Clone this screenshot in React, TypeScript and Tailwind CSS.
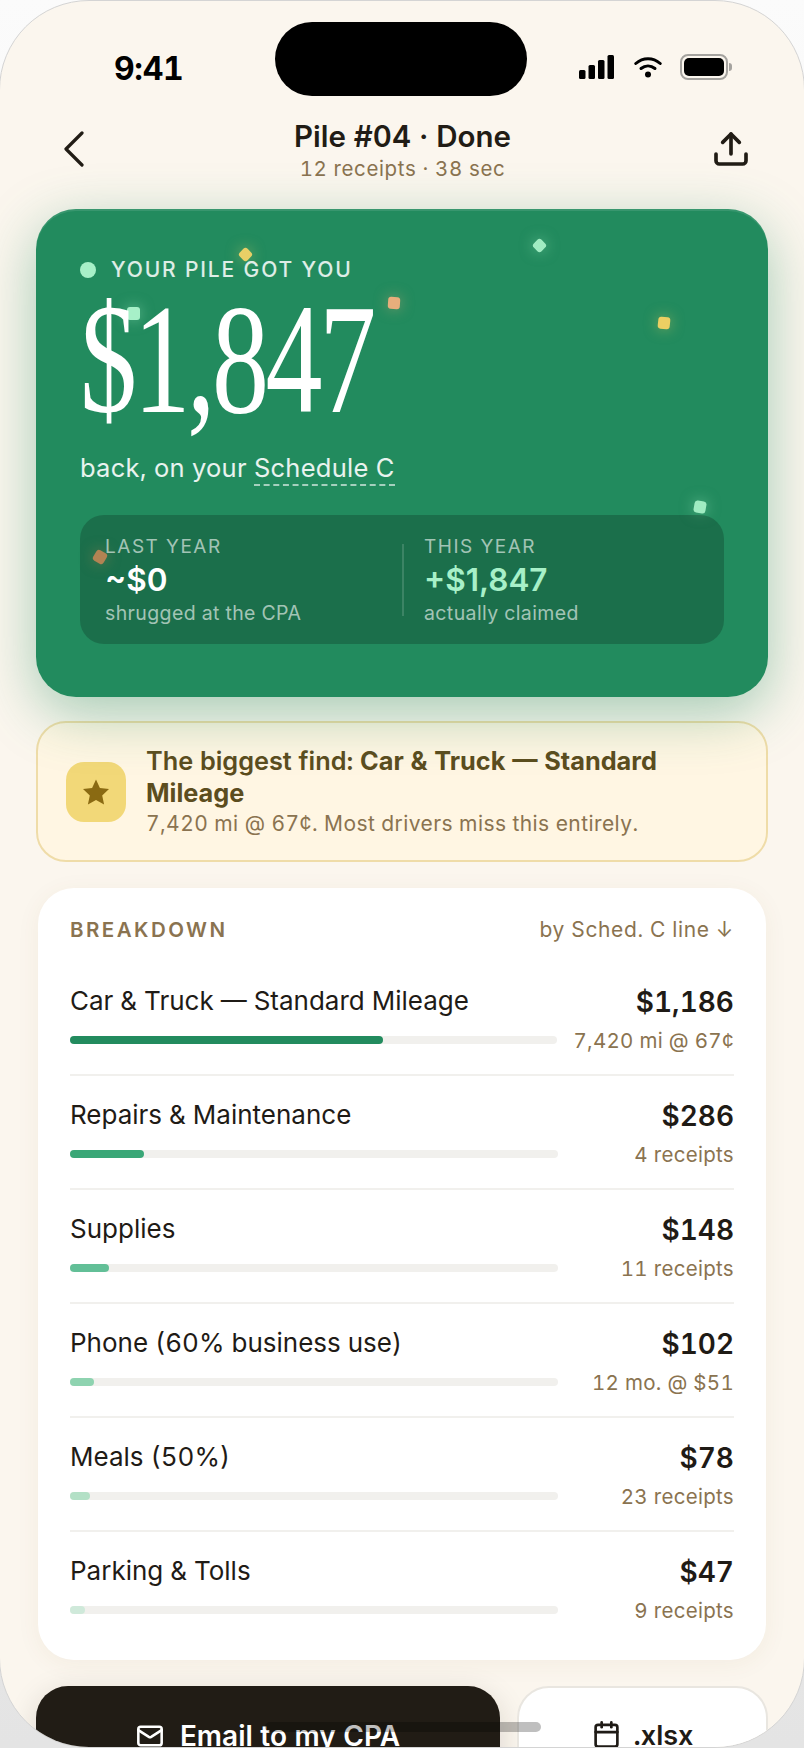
import { Calendar, Mail, Upload } from 'lucide-react';

const ROWS = [
  { name: 'Car & Truck — Standard Mileage', amount: '$1,186', note: '7,420 mi @ 67¢', pct: 64.2, color: 'bg-[#228b5e]' },
  { name: 'Repairs & Maintenance', amount: '$286', note: '4 receipts', pct: 15.2, color: 'bg-[#3aa777]' },
  { name: 'Supplies', amount: '$148', note: '11 receipts', pct: 8, color: 'bg-[#62bf97]' },
  { name: 'Phone (60% business use)', amount: '$102', note: '12 mo. @ $51', pct: 5, color: 'bg-[#8ed3b0]' },
  { name: 'Meals (50%)', amount: '$78', note: '23 receipts', pct: 4, color: 'bg-[#b3e0c6]' },
  { name: 'Parking & Tolls', amount: '$47', note: '9 receipts', pct: 3, color: 'bg-[#cfe9da]' },
];

function StatusBar() {
  return (
    <div className="flex h-[112px] items-start justify-between pl-[114px] pr-[72px] pt-[22px]">
      <span className="mt-[26px] text-[32px] font-bold leading-[40px] tracking-[-0.01em] text-black">9:41</span>
      <div className="absolute left-[275px] top-[21px] h-[74px] w-[252px] rounded-full bg-black" />
      <div className="mt-[31px] flex items-center gap-[18px]">
        <svg className="mr-[2px]" width="35" height="24" viewBox="0 0 35 24" fill="#000">
          <rect x="0" y="15" width="6.5" height="9" rx="1.5" />
          <rect x="9.5" y="10" width="6.5" height="14" rx="1.5" />
          <rect x="19" y="5" width="6.5" height="19" rx="1.5" />
          <rect x="28.5" y="0" width="6.5" height="24" rx="1.5" />
        </svg>
        <svg width="28" height="22" viewBox="0 0 28 22" fill="none" stroke="#000" strokeWidth="3" strokeLinecap="round">
          <path d="M1.8 7.5C9 1 19 1 26.2 7.5" />
          <path d="M7 12.5C11.2 9 16.8 9 21 12.5" />
          <circle cx="14" cy="18.5" r="3" fill="#000" stroke="none" />
        </svg>
        <div className="flex items-center">
          <div className="h-[26px] w-[48px] rounded-[8px] border-2 border-[#a5a39f] p-[2px]">
            <div className="h-full w-full rounded-[5px] bg-black" />
          </div>
          <div className="ml-[1px] h-[8px] w-[3px] rounded-r-full bg-[#a5a39f]" />
        </div>
      </div>
    </div>
  );
}

function Spark({ className }: { className: string }) {
  return <div className={`absolute rounded-[3px] ${className}`} />;
}

function Hero() {
  return (
    <section className="relative z-10 h-[488px] rounded-[40px] bg-[#228b5e] px-[44px] pt-[45px] shadow-[0_16px_56px_rgba(34,139,94,0.4),inset_0_2px_0_rgba(255,255,255,0.1)]">
      {/* confetti, offsets are relative to the card */}
      <Spark className="left-[204px] top-[40px] h-[11px] w-[11px] rotate-45 bg-[#e8cf66] shadow-[0_0_14px_rgba(232,207,102,0.5)]" />
      <Spark className="left-[91px] top-[98px] h-[13px] w-[13px] bg-[#a7f0c8] shadow-[0_0_14px_rgba(167,240,200,0.5)]" />
      <Spark className="left-[352px] top-[88px] h-[12px] w-[12px] rotate-[4deg] bg-[#e8ae7c] shadow-[0_0_14px_rgba(232,174,124,0.5)]" />
      <Spark className="left-[498px] top-[31px] h-[11px] w-[11px] rotate-45 bg-[#a0ecc2] shadow-[0_0_14px_rgba(160,236,194,0.5)]" />
      <Spark className="left-[622px] top-[108px] h-[12px] w-[12px] rotate-[6deg] bg-[#eccf63] shadow-[0_0_14px_rgba(236,207,99,0.5)]" />
      <Spark className="left-[658px] top-[292px] h-[12px] w-[12px] rotate-[10deg] bg-[#a0ecc2] shadow-[0_0_14px_rgba(160,236,194,0.5)]" />
      <Spark className="left-[58px] top-[342px] h-[12px] w-[12px] rotate-[30deg] bg-[#e0a468] shadow-[0_0_14px_rgba(224,164,104,0.5)]" />

      <div className="relative flex items-center gap-[15px]">
        <span className="h-[16px] w-[16px] rounded-full bg-[#a7f0c8]" />
        <span className="text-[21px] font-medium leading-[32px] tracking-[0.088em] text-white/85">YOUR PILE GOT YOU</span>
      </div>
      <div className="relative h-[159px] whitespace-nowrap font-['Liberation_Serif',serif] text-[156px] leading-[148px] tracking-[-0.03em] text-white">
        <span className="inline-block origin-left scale-x-[0.73]">$1,847</span>
      </div>
      <p className="relative mt-[6px] text-[25.5px] leading-[34px] tracking-[0.01em] text-white/90">
        back, on your <span className="border-b-2 border-dashed border-white/60 pb-[1px]">Schedule C</span>
      </p>
      <div className="relative mt-[30px] flex h-[129px] items-center rounded-[24px] bg-black/20">
        <div className="w-[322px] pl-[25px]">
          <Stat label="LAST YEAR" value="~$0" note="shrugged at the CPA" valueColor="text-white" />
        </div>
        <div className="h-[72px] w-[2px] bg-white/15" />
        <div className="flex-1 pl-[20px]">
          <Stat label="THIS YEAR" value="+$1,847" note="actually claimed" valueColor="text-[#a7f0c8]" />
        </div>
      </div>
    </section>
  );
}

function Stat({ label, value, note, valueColor }: { label: string; value: string; note: string; valueColor: string }) {
  return (
    <div>
      <div className="text-[19px] leading-[27px] tracking-[0.08em] text-white/60">{label}</div>
      <div className={`text-[31.5px] font-semibold leading-[40px] [font-variant-numeric:normal] ${valueColor}`}>{value}</div>
      <div className="text-[19.5px] leading-[26px] tracking-[0.02em] text-white/60">{note}</div>
    </div>
  );
}

function Callout() {
  return (
    <section className="mt-[24px] flex h-[141px] items-center gap-[20px] rounded-[30px] border-2 border-[#efdca8] bg-[#fff6e3] pl-[28px] pr-[24px]">
      <div className="flex h-[60px] w-[60px] shrink-0 items-center justify-center rounded-[18px] bg-[#f2d878]">
        <svg width="30" height="30" viewBox="0 0 30 30" fill="#8a6a12">
          <path d="M15 2.5l3.9 8.6 9.1 1-6.8 6.3 1.9 9.1-8.1-4.6-8.1 4.6 1.9-9.1L2 12.1l9.1-1z" />
        </svg>
      </div>
      <div className="-mt-[1px]">
        <p className="text-[25.3px] font-semibold leading-[32px] text-[#5c4d1e]">
          The biggest find: <strong className="font-bold">Car &amp; Truck — Standard Mileage</strong>
        </p>
        <p className="mt-[1px] text-[21px] leading-[28px] tracking-[0.02em] text-[#8a7350]">
          7,420 mi @ 67¢. Most drivers miss this entirely.
        </p>
      </div>
    </section>
  );
}

function Breakdown() {
  return (
    <section className="relative z-10 mx-[2px] mt-[26px] h-[772px] rounded-[36px] bg-white px-[32px] pt-[28px] shadow-[0_4px_24px_rgba(120,80,40,0.06)]">
      <div className="flex items-center justify-between pb-[18px]">
        <span className="text-[20.5px] font-semibold leading-[28px] tracking-[0.12em] text-[#8a7350]">BREAKDOWN</span>
        <span className="text-[21px] leading-[28px] tracking-[0.03em] text-[#8a7350]">by Sched. C line ↓</span>
      </div>
      {ROWS.map((row, i) => (
        <div key={row.name} className={`flex h-[114px] gap-[16px] pt-[21px] ${i < ROWS.length - 1 ? 'border-b-2 border-[#f1f0ed]' : ''}`}>
          <div className="min-w-0 flex-1">
            <div className="whitespace-nowrap text-[26px] leading-[36px] text-[#1f1b16]">{row.name}</div>
            <div className="mt-[17px] h-[8px] rounded-full bg-[#f1f0ed]">
              <div className={`h-full rounded-full ${row.color}`} style={{ width: `${row.pct}%` }} />
            </div>
          </div>
          <div className="min-w-[160px] text-right">
            <div className="text-[28px] font-semibold leading-[38px] text-[#1f1b16]">{row.amount}</div>
            <div className="mt-[6px] whitespace-nowrap text-[20.5px] leading-[28px] tracking-[0.015em] text-[#8a7350]">{row.note}</div>
          </div>
        </div>
      ))}
    </section>
  );
}

function Actions() {
  return (
    <div className="relative z-10 mt-[26px] flex gap-[17px]">
      <button className="flex h-[100px] w-[464px] items-center justify-center gap-[16px] rounded-[32px] bg-[#211c15] text-[28px] font-semibold text-white shadow-[0_8px_30px_rgba(33,28,21,0.15)]">
        <Mail size={28} strokeWidth={2.2} />
        Email to my CPA
      </button>
      <button className="flex h-[100px] flex-1 items-center justify-center gap-[13px] rounded-[32px] border-2 border-[#e9e6e0] bg-white text-[27px] font-semibold text-[#1f1b16]">
        <Calendar size={29} strokeWidth={2.2} className="mb-[4px]" />
        .xlsx
      </button>
    </div>
  );
}

export default function App() {
  return (
    <div className="h-[1748px] w-[804px] overflow-hidden bg-gradient-to-b from-[#fbfbfb] to-[#e4e4e4] font-['Inter',sans-serif] tabular-nums">
      <div className="relative -ml-[1px] h-full w-[806px] overflow-hidden rounded-[90px] border border-[#d4d4d4] bg-[#fbf6ee]">
        <StatusBar />
        <header className="flex h-[72px] items-center justify-between pl-[63px] pr-[53px]">
          <div className="w-[31px]">
            <svg width="22" height="36" viewBox="0 0 22 36" fill="none" stroke="#211c15" strokeWidth="3.2" strokeLinecap="round" strokeLinejoin="round">
              <path d="M19 2L3 18l16 16" />
            </svg>
          </div>
          <div className="text-center">
            <div className="text-[29.5px] font-semibold leading-[34px] text-[#211c15]">Pile #04 · Done</div>
            <div className="mt-[3px] -mb-[3px] text-[20.5px] leading-[26px] tracking-[0.03em] text-[#8a7350]">12 receipts · 38 sec</div>
          </div>
          <Upload size={40} strokeWidth={2.2} className="text-[#211c15]" />
        </header>
        <main className="px-[36px] pt-[24px]">
          <Hero />
          <Callout />
          <Breakdown />
          <Actions />
        </main>
        <div className="absolute bottom-[15px] left-[265px] z-20 h-[10px] w-[276px] rounded-full bg-black/25" />
      </div>
    </div>
  );
}
